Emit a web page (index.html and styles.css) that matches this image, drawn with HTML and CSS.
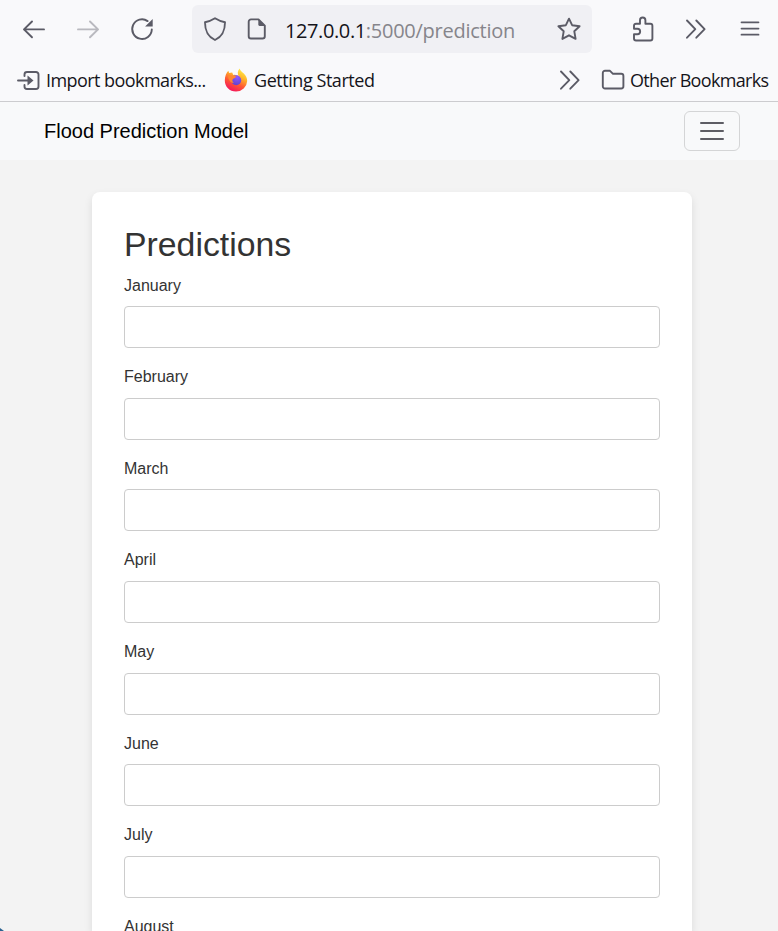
FILE: index.html
```html
<!DOCTYPE html>
<html lang="en">
<head>
<meta charset="utf-8">
<title>Flood Prediction Model</title>
<link rel="stylesheet" href="styles.css">
</head>
<body>
<header class="chrome">
  <div class="toolbar">
    <svg class="icon back" width="24" height="24" viewBox="0 0 24 24"><path d="M22 12.400H2M10 4.500L2 12.400l8 7.900"/></svg>
    <svg class="icon forward" width="24" height="24" viewBox="0 0 24 24"><path d="M2 12.400h20M14 4.500l8 7.900-8 7.900"/></svg>
    <svg class="icon reload" width="24" height="24" viewBox="0 0 24 24"><path d="M17.600 4.100A9.800 9.800 0 1 0 21.800 12.500"/><path class="solid" d="M22.700 2v7.600h-7.600z"/></svg>
    <div class="urlbar">
      <svg class="icon shield" width="24" height="26" viewBox="0 0 24 26"><path d="M12 2.200c3 1.900 6.400 3.300 10 4C22 14 20.200 20 12 24 3.800 20 2 14 2 6.200c3.600-.7 7-2.100 10-4z"/></svg>
      <svg class="icon page" width="20" height="24" viewBox="0 0 20 24"><path d="M11.500 2.400H4a2.300 2.300 0 0 0-2.300 2.300v14.500A2.300 2.300 0 0 0 4 21.500h11.500a2.300 2.300 0 0 0 2.300-2.300V8.700z"/><path class="solid" d="M11.300 2l6.900 6.900h-5.600a1.300 1.300 0 0 1-1.300-1.300z"/></svg>
      <span class="url"><span class="host">127.0.0.1</span><span class="path">:5000/prediction</span></span>
      <svg class="icon star" width="26" height="26" viewBox="0 0 26 26"><path d="M13 2.700l3.100 6.500 7.500 1-5.300 5.100 1.300 7.600-6.600-3.600-6.600 3.600 1.300-7.600-5.300-5.100 7.500-1z"/></svg>
    </div>
    <svg class="icon puzzle" width="24" height="28" viewBox="0 0 24 28"><path d="M9 8.700V5.200a2.700 2.700 0 0 1 5.400 0v3.500h5a2 2 0 0 1 2 2v12.800a2 2 0 0 1-2 2H5a2 2 0 0 1-2-2v-4.300h3.400a2.700 2.700 0 0 0 0-5.500H3v-3a2 2 0 0 1 2-2z"/></svg>
    <svg class="icon more" width="22" height="22" viewBox="0 0 22 22"><path d="M2 2.500l8.300 8.600L2 19.700M11.300 2.500l8.300 8.600-8.300 8.600"/></svg>
    <svg class="icon menu" width="20" height="20" viewBox="0 0 20 20"><path d="M1.500 3.300h17M1.500 9.600h17M1.500 15.700h17"/></svg>
  </div>
  <div class="bookmarks">
    <svg class="icon import" width="24" height="22" viewBox="0 0 24 22"><path d="M7.500 6V4.500A2.500 2.500 0 0 1 10 2h9A2.500 2.500 0 0 1 21.500 4.500v12a2.500 2.500 0 0 1-2.500 2.500H10a2.500 2.500 0 0 1-2.500-2.500V15M1 10.500h13"/><path class="solid" d="M10.500 5.500l6 5-6 5z"/></svg>
    <span class="label import-label">Import bookmarks...</span>
    <svg class="firefox" width="24" height="24" viewBox="0 0 24 24">
      <defs>
        <linearGradient id="flame" x1=".8" y1="0" x2=".3" y2="1"><stop offset="0" stop-color="#fff44f"/><stop offset=".35" stop-color="#ffb429"/><stop offset=".65" stop-color="#ff5634"/><stop offset="1" stop-color="#f31260"/></linearGradient>
        <radialGradient id="globe" cx=".6" cy=".2" r=".9"><stop offset="0" stop-color="#9059ff"/><stop offset="1" stop-color="#5b3fc8"/></radialGradient>
      </defs>
      <path fill="url(#flame)" d="M15.700.5c.3 2.200 2.600 3.500 4.100 5 2.200 2 3.400 4.900 3.400 7.400A11.200 11.200 0 0 1 12 23.500C5.500 23.500.8 18.700.8 12.500c0-4.200 1.600-7.500 3.500-9.700l.8 2.300 3.100-.5 1 2.300c2.600-.4 4.800.3 5.700 2-1.500-3.100-1.700-6 .8-8.400z"/>
      <circle fill="url(#globe)" cx="12.200" cy="12.200" r="5"/>
      <path fill="#ff8730" d="M3.900 7.200l5.500.2c1.500.2 2.500.6 2.600 1.400-.8 1.500-2.800 1.400-3.500 3-.4 1.200.3 2.500 1.700 2.900-3.700.8-6-3.100-6.300-7.500z"/>
    </svg>
    <span class="label started-label">Getting Started</span>
    <svg class="icon overflow" width="22" height="22" viewBox="0 0 22 22"><path d="M2 2.500l8.300 8.600L2 19.700M11.300 2.500l8.300 8.600-8.300 8.600"/></svg>
    <svg class="icon folder" width="24" height="22" viewBox="0 0 24 22"><path d="M4 1.800h5l3 3h8.200a2.200 2.200 0 0 1 2.200 2.200v10.300a2.200 2.200 0 0 1-2.200 2.200H4a2.200 2.200 0 0 1-2.200-2.200V4A2.200 2.200 0 0 1 4 1.800z"/></svg>
    <span class="label other-label">Other Bookmarks</span>
  </div>
</header>
<nav class="navbar">
  <span class="brand">Flood Prediction Model</span>
  <button class="toggler" type="button" aria-label="Toggle navigation">
    <svg width="30" height="30" viewBox="0 0 30 30"><path d="M4 7h22M4 15h22M4 23h22"/></svg>
  </button>
</nav>
<main class="card">
  <h1>Predictions</h1>
  <form>
    <div class="field"><label for="jan">January</label><input id="jan" type="text"></div>
    <div class="field"><label for="feb">February</label><input id="feb" type="text"></div>
    <div class="field"><label for="mar">March</label><input id="mar" type="text"></div>
    <div class="field"><label for="apr">April</label><input id="apr" type="text"></div>
    <div class="field"><label for="may">May</label><input id="may" type="text"></div>
    <div class="field"><label for="jun">June</label><input id="jun" type="text"></div>
    <div class="field"><label for="jul">July</label><input id="jul" type="text"></div>
    <div class="field"><label for="aug">August</label></div>
  </form>
</main>
<div class="corner"></div>
</body>
</html>
```
FILE: styles.css
```css
* { box-sizing: border-box; }
html, body { height: 931px; overflow: hidden; }
body {
  display: flex;
  flex-direction: column;
  margin: 0;
  background: #f3f3f3;
  color: #333;
  font: 16px/1.6 "Liberation Sans", Arial, sans-serif;
}
svg { display: block; flex: none; }

/* Browser chrome */
.chrome {
  flex: none;
  height: 102px;
  background: #f9f9fb;
  border-bottom: 1px solid #cccccf;
  color: #15141a;
  font-family: "Open Sans", "Noto Sans", sans-serif;
}
.icon { fill: none; stroke: #5b5b66; stroke-width: 1.9; stroke-linecap: round; stroke-linejoin: round; }
.icon .solid { fill: #5b5b66; stroke: none; }
.toolbar { display: flex; align-items: center; height: 58px; padding-left: 22px; }
.forward { margin-left: 30px; opacity: .4; }
.reload { margin-left: 30px; }
.urlbar {
  display: flex;
  align-items: center;
  width: 400px;
  height: 48px;
  margin-left: 38px;
  padding: 0 10px 0 11px;
  background: #f0f0f4;
  border-radius: 6px;
}
.page { margin-left: 20px; }
.url { margin-left: 18px; padding-top: 3px; font-size: 20px; white-space: nowrap; }
.host { letter-spacing: -.4px; }
.path { color: #86858b; letter-spacing: -.25px; }
.star { margin-left: auto; }
.puzzle { margin-left: 38.5px; }
.more { margin-left: 30.5px; }
.menu { margin-left: 33px; stroke-width: 1.8; }
.bookmarks { display: flex; align-items: center; height: 43px; padding: 2px 10px 0 17px; }
.label { flex: none; font-size: 18px; line-height: 24px; padding-bottom: 2px; white-space: nowrap; }
.import-label { width: 183px; padding-left: 5px; letter-spacing: -.56px; }
.firefox { margin: 0 0 2px 0; }
.started-label { padding-left: 6px; letter-spacing: -.45px; }
.overflow { margin: 0 0 2px auto; }
.folder { margin: 0 0 2px 20px; }
.other-label { width: 144px; margin-right: -1px; padding-left: 5px; letter-spacing: -.66px; }

/* Site navigation */
.navbar {
  display: flex;
  flex: none;
  align-items: center;
  justify-content: space-between;
  height: 58px;
  padding: 0 38px 0 44px;
  background: #f8f9fa;
}
.brand { color: #000; font-size: 20px; line-height: 30px; }
.toggler {
  display: flex;
  padding: 4px 12px;
  background: transparent;
  border: 1px solid #d4d5d6;
  border-radius: 6px;
}
.toggler svg { stroke: #5d5d64; stroke-width: 2; stroke-linecap: round; }

/* Prediction form */
.card {
  flex: 1;
  min-height: 0;
  width: 600px;
  margin: 32px 0 0 92px;
  padding: 32px 32px 0;
  background: #fff;
  border-radius: 8px 8px 0 0;
  box-shadow: 0 4px 8px rgba(0, 0, 0, .1);
}
h1 { margin: 0 0 8.7px; font-size: 33.8px; font-weight: 500; line-height: 40px; }
.field { margin-bottom: 16px; }
.field label { display: block; margin-bottom: 8px; }
.field input {
  display: block;
  width: 100%;
  height: 42px;
  padding: 8px;
  background: #fff;
  border: 1px solid #ccc;
  border-radius: 4px;
}
.corner {
  position: absolute;
  left: 0;
  bottom: 0;
  width: 4px;
  height: 3px;
  background: #2a6290;
  clip-path: polygon(0 0, 100% 100%, 0 100%);
}
```
